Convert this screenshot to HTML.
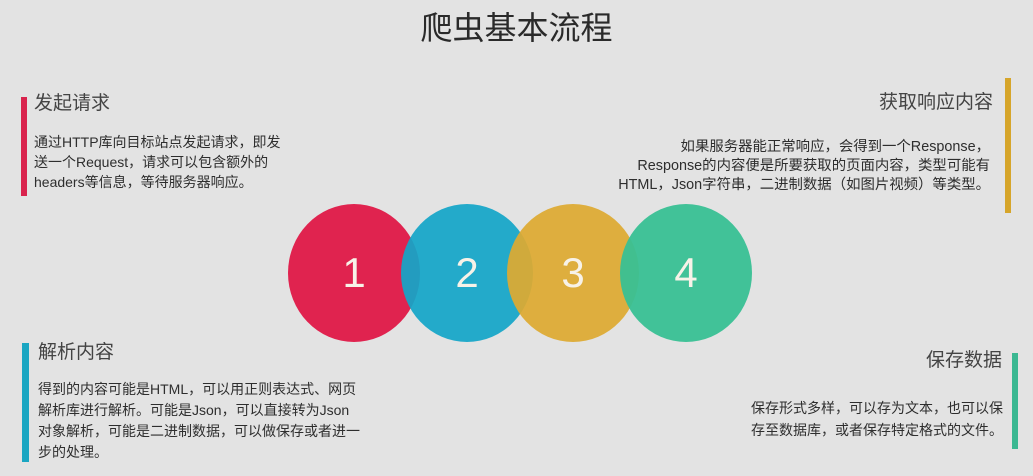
<!DOCTYPE html>
<html><head><meta charset="utf-8"><style>
body{margin:0;width:1033px;height:476px;background:#e3e3e3;position:relative;overflow:hidden;font-family:"Liberation Sans","Noto Sans CJK SC",sans-serif;color:#333}
.a{position:absolute;white-space:nowrap}
.t{left:0;width:1033px;text-align:center;top:3px;font-size:32px;color:#2a2a2a;font-weight:400}
.h{font-size:19px;color:#444;line-height:24px}
.b{font-size:14px;line-height:20px;color:#2e2e2e}
.bar{position:absolute}
.c{position:absolute;width:132px;height:138px;border-radius:50%;color:#f7f2e8;font-size:42px;text-align:center;line-height:138px;top:204px}
</style></head><body>
<div class="a t">爬虫基本流程</div>

<div class="bar" style="left:21px;top:97px;width:6px;height:99px;background:#d9234d"></div>
<div class="a h" style="left:34px;top:92px">发起请求</div>
<div class="a b" style="left:34px;top:132px">通过HTTP库向目标站点发起请求，即发<br>送一个Request，请求可以包含额外的<br>headers等信息，等待服务器响应。</div>

<div class="bar" style="left:1005px;top:78px;width:6px;height:135px;background:#d6a52a"></div>
<div class="a h" style="right:40px;top:91px;text-align:right">获取响应内容</div>
<div class="a b" style="right:43px;top:138px;text-align:right;line-height:19px;font-size:14.4px">如果服务器能正常响应，会得到一个Response，<br>Response的内容便是所要获取的页面内容，类型可能有<br>HTML，Json字符串，二进制数据（如图片视频）等类型。</div>

<div class="bar" style="left:22px;top:343px;width:7px;height:119px;background:#1aa6c2"></div>
<div class="a h" style="left:38px;top:341px">解析内容</div>
<div class="a b" style="left:38px;top:379px;line-height:21px">得到的内容可能是HTML，可以用正则表达式、网页<br>解析库进行解析。可能是Json，可以直接转为Json<br>对象解析，可能是二进制数据，可以做保存或者进一<br>步的处理。</div>

<div class="bar" style="left:1012px;top:353px;width:6px;height:96px;background:#3bb892"></div>
<div class="a h" style="right:31px;top:349px;text-align:right">保存数据</div>
<div class="a b" style="right:30px;top:397px;text-align:right;line-height:22px">保存形式多样，可以存为文本，也可以保<br>存至数据库，或者保存特定格式的文件。</div>

<div class="c" style="left:288px;background:#e0234f">1</div>
<div class="c" style="left:401px;background:rgba(20,166,200,0.93)">2</div>
<div class="c" style="left:507px;background:rgba(222,170,50,0.93)">3</div>
<div class="c" style="left:620px;background:rgba(56,192,148,0.95)">4</div>
</body></html>
